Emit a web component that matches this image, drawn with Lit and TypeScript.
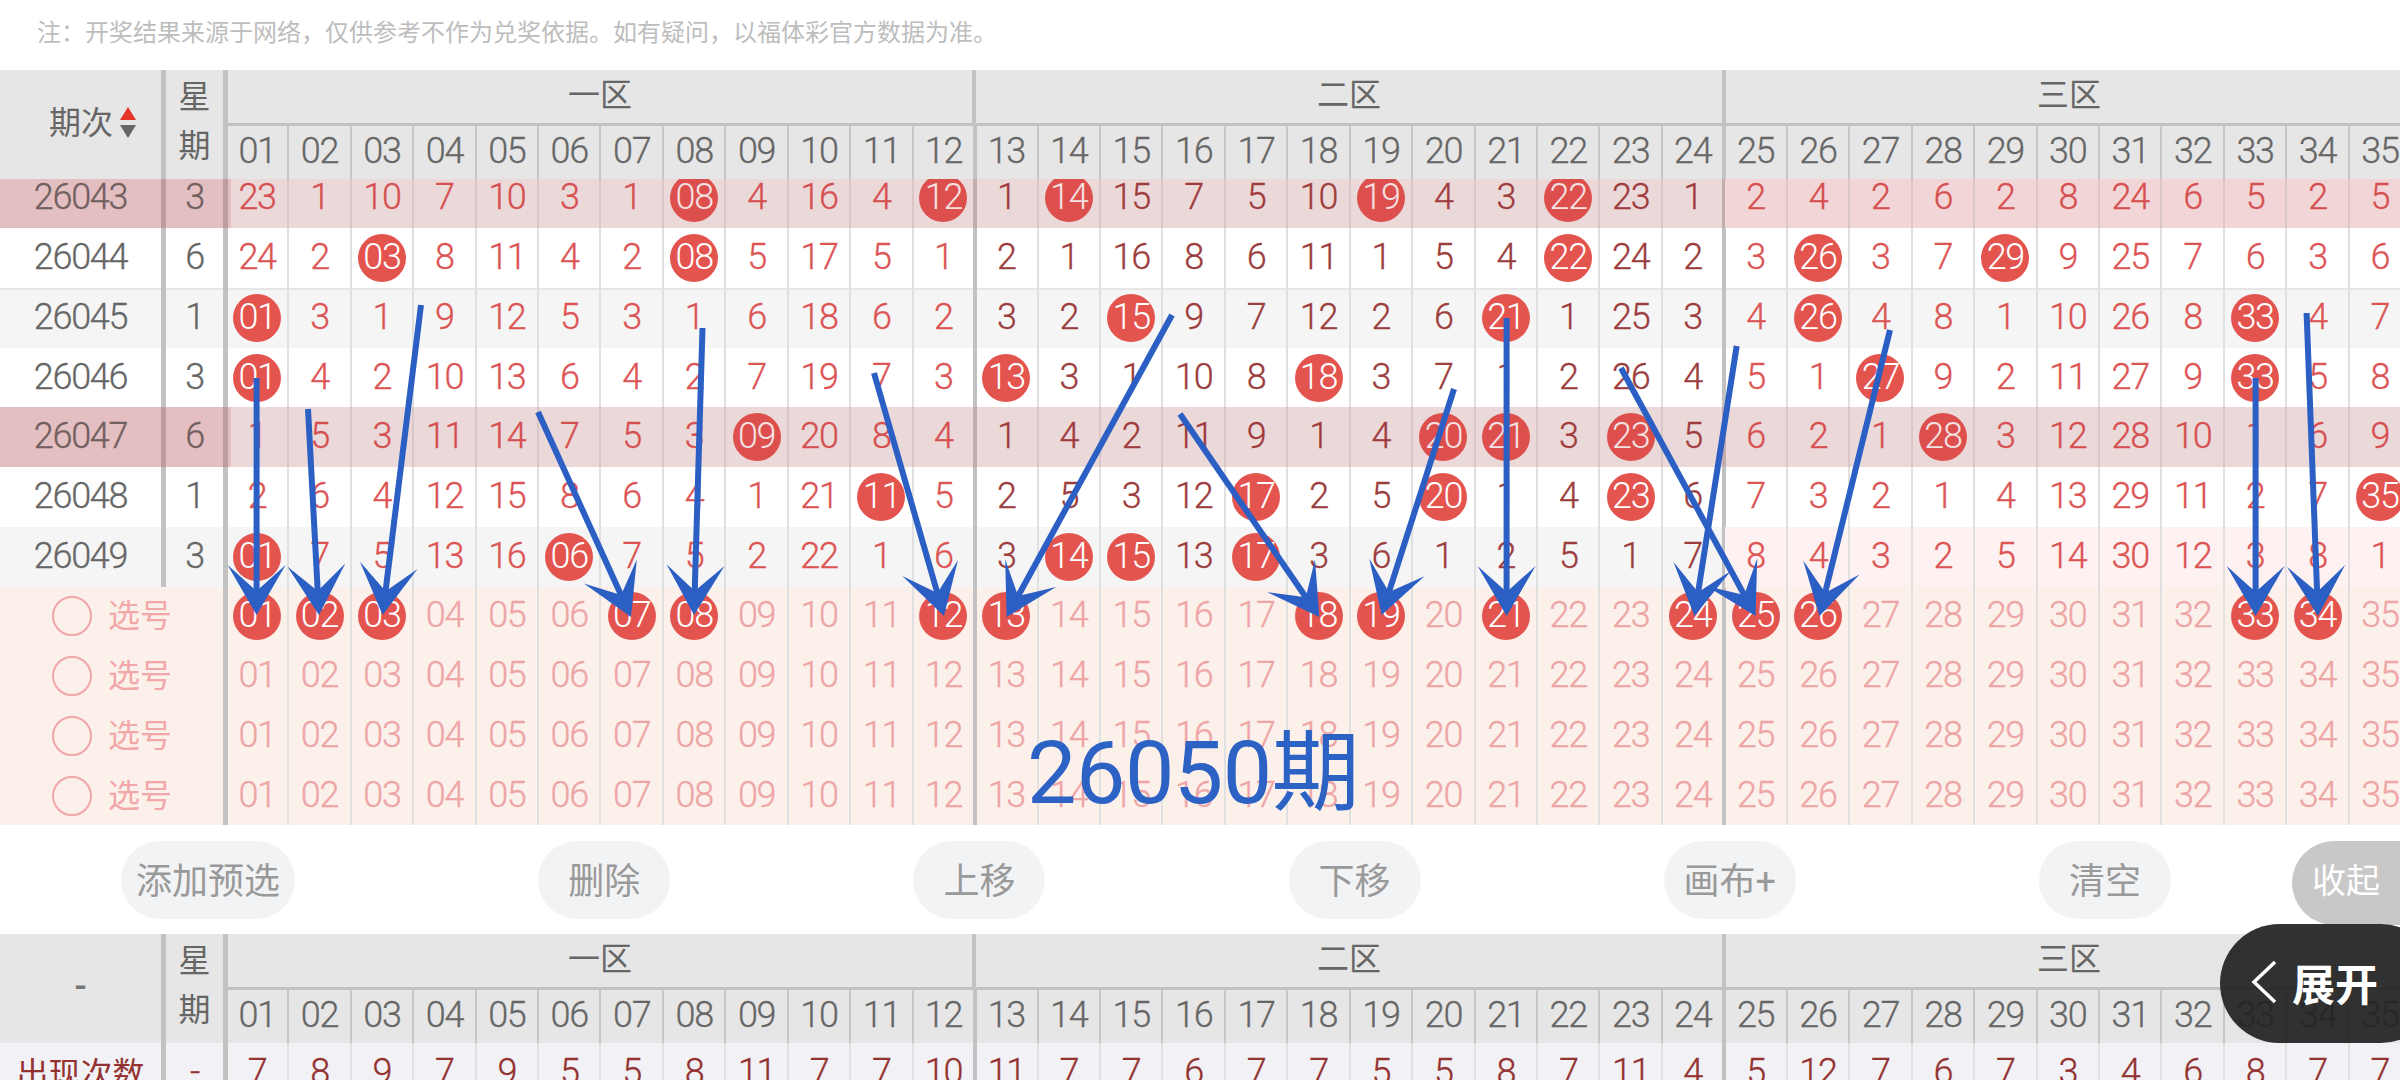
import { LitElement, html, css, svg } from "lit";
import { customElement } from "lit/decorators.js";

const pad = (n: number) => String(n).padStart(2, "0");
const ALL = Array.from({ length: 35 }, (_, i) => i + 1);

// "*" marks a drawn ball
const ROWS: { id: string; week: string; vals: string; cls: string }[] = [
  { id: "26043", week: "3", cls: "grey hl tint", vals: "23 1 10 7 10 3 1 *8 4 16 4 *12 1 *14 15 7 5 10 *19 4 3 *22 23 1 2 4 2 6 2 8 24 6 5 2 5" },
  { id: "26044", week: "6", cls: "", vals: "24 2 *3 8 11 4 2 *8 5 17 5 1 2 1 16 8 6 11 1 5 4 *22 24 2 3 *26 3 7 *29 9 25 7 6 3 6" },
  { id: "26045", week: "1", cls: "grey divided", vals: "*1 3 1 9 12 5 3 1 6 18 6 2 3 2 *15 9 7 12 2 6 *21 1 25 3 4 *26 4 8 1 10 26 8 *33 4 7" },
  { id: "26046", week: "3", cls: "", vals: "*1 4 2 10 13 6 4 2 7 19 7 3 *13 3 1 10 8 *18 3 7 1 2 26 4 5 1 *27 9 2 11 27 9 *33 5 8" },
  { id: "26047", week: "6", cls: "grey hl", vals: "1 5 3 11 14 7 5 3 *9 20 8 4 1 4 2 11 9 1 4 *20 *21 3 *23 5 6 2 1 *28 3 12 28 10 1 6 9" },
  { id: "26048", week: "1", cls: "", vals: "2 6 4 12 15 8 6 4 1 21 *11 5 2 5 3 12 *17 2 5 *20 1 4 *23 6 7 3 2 1 4 13 29 11 2 7 *35" },
  { id: "26049", week: "3", cls: "grey tint", vals: "*1 7 5 13 16 *6 7 5 2 22 1 6 3 *14 *15 13 *17 3 6 1 2 5 1 7 8 4 3 2 5 14 30 12 3 8 1" },
];

const PICKED = new Set([1, 2, 3, 7, 8, 12, 13, 18, 19, 21, 24, 25, 26, 33, 34]);
const TOTALS = "7 8 9 7 9 5 5 8 11 7 7 10 11 7 7 6 7 7 5 5 8 7 11 4 5 12 7 6 7 3 4 6 8 7 7".split(" ");

const ARROWS: number[][] = [
  [256.6, 378, 256.6, 615],
  [308, 409, 319, 615],
  [421, 305, 382.6, 615],
  [538, 412, 631, 617],
  [702.5, 328, 694, 615],
  [874, 373, 944, 616],
  [1172, 315, 1006.6, 617],
  [1180, 414, 1319.4, 617],
  [1454, 389, 1381.6, 615],
  [1506.6, 318, 1506.6, 616],
  [1736.7, 346, 1694.4, 616],
  [1621, 368, 1755.6, 616],
  [1890, 330, 1819.4, 616],
  [2255.6, 378, 2255.6, 616],
  [2306.6, 313, 2318, 616],
];

@customElement("app-root")
export class AppRoot extends LitElement {
  static styles = css`
    :host {
      display: block;
      width: 2400px;
      height: 1080px;
      font-family: Roboto, "Noto Sans CJK SC", sans-serif;
      --cell: 62.45px;
      --line: #e0e0e0;
      --thick: #c2c2c2;
    }
    .app {
      position: relative;
      width: 2400px;
      height: 1080px;
      overflow: hidden;
      background: #fff;
    }
    .note {
      height: 70px;
      box-sizing: border-box;
      padding: 19px 0 0 37px;
      font-size: 24px;
      line-height: 28px;
      color: #bdbdbd;
    }
    .num {
      font-size: 36px;
      font-weight: 300;
      letter-spacing: -1.3px;
      line-height: 1;
      -webkit-text-stroke: 0.3px currentColor;
    }

    /* header */
    .hdr {
      display: flex;
      height: 108.7px;
      background: #e6e6e6;
      color: #666;
      position: relative;
      z-index: 2;
    }
    .h-period {
      flex: none;
      width: 166px;
      box-sizing: border-box;
      border-right: 5px solid var(--thick);
      display: flex;
      align-items: center;
      justify-content: center;
      font-size: 32px;
      line-height: 1;
      padding-bottom: 3px;
    }
    .h-week {
      flex: none;
      width: 62px;
      margin-right: -1.15px;
      box-sizing: border-box;
      border-right: 5px solid var(--thick);
      display: flex;
      flex-direction: column;
      align-items: center;
      justify-content: center;
      font-size: 32px;
      line-height: 49px;
      padding-bottom: 4px;
    }
    .sort {
      display: flex;
      flex-direction: column;
      gap: 5px;
      margin: 0 -24px 0 7px;
    }
    .sort svg {
      display: block;
    }
    .dash {
      font-size: 36px;
      font-weight: 500;
      color: #777;
    }
    .h-grid {
      display: flex;
      flex-direction: column;
      flex: none;
      width: calc(var(--cell) * 35);
    }
    .zones {
      display: flex;
      height: 56px;
      box-sizing: border-box;
      border-bottom: 3px solid var(--thick);
      margin-left: 1.15px;
    }
    .zone {
      box-sizing: border-box;
      display: flex;
      align-items: center;
      justify-content: center;
      font-size: 32px;
      line-height: 1;
      padding-bottom: 3px;
      border-right: 4px solid var(--thick);
      flex: none;
    }
    .zone.z12 {
      width: calc(var(--cell) * 12);
    }
    .zone.z11 {
      width: calc(var(--cell) * 11);
      border-right: 0;
    }
    .zone.first {
      width: calc(var(--cell) * 12 - 1.15px);
    }
    .h-nums {
      display: flex;
      flex: 1;
    }
    .h-nums .cell {
      border-right-color: #c6c6c6;
    }
    .h-nums .cell.thick {
      border-right-color: var(--thick);
    }

    /* cells */
    .cell {
      flex: none;
      width: var(--cell);
      height: 100%;
      box-sizing: border-box;
      border-right: 2px solid var(--line);
      display: flex;
      align-items: center;
      justify-content: center;
    }
    .cell.thick {
      width: calc(var(--cell) + 1px);
      margin-right: -1px;
      border-right: 4px solid var(--thick);
    }
    .cell span,
    .r-period span,
    .r-week span {
      position: relative;
      top: -1px;
    }
    .ball {
      width: 48px;
      height: 48px;
      border-radius: 50%;
      background: #e4544f;
      color: #fff;
      display: flex;
      align-items: center;
      justify-content: center;
      flex: none;
      -webkit-text-stroke: 0;
    }

    /* rows */
    .body {
      overflow: hidden;
    }
    .scroll {
      margin-top: -10.15px;
    }
    .row {
      position: relative;
      display: flex;
      height: 59.73px;
      color: #dc5454;
    }
    .row .z2 {
      color: #9c3d3d;
    }
    .row .ball {
      color: #fff;
    }
    .row.grey {
      background: #f5f5f5;
    }
    .row.tint .z3 {
      background: #fdf1f1;
    }
    .row.divided {
      box-shadow: inset 0 2px 0 #e6e6e6;
    }
    .row.hl::after,
    .row.hl::before {
      content: "";
      position: absolute;
      top: 0;
      bottom: 0;
      left: 0;
      background: rgba(180, 53, 60, 0.15);
    }
    .row.hl::after {
      right: 0;
    }
    .row.hl::before {
      width: 231px;
    }
    .r-period {
      flex: none;
      width: 166px;
      box-sizing: border-box;
      border-right: 5px solid var(--thick);
      display: flex;
      align-items: center;
      justify-content: center;
      color: #666;
    }
    .r-week {
      flex: none;
      width: 62px;
      margin-right: -1.15px;
      box-sizing: border-box;
      border-right: 5px solid var(--thick);
      display: flex;
      align-items: center;
      justify-content: center;
      color: #666;
    }

    /* pick rows */
    .picks {
      background: #fcf0eb;
    }
    .pick {
      display: flex;
      height: 59.73px;
      color: #eea5a5;
    }
    .p-label {
      flex: none;
      width: 228px;
      margin-right: -1.15px;
      box-sizing: border-box;
      border-right: 5px solid var(--thick);
      display: flex;
      align-items: center;
      padding-left: 52px;
      gap: 16px;
      font-size: 32px;
      color: #f2a8a8;
    }
    .p-label span:last-child {
      position: relative;
      top: -3px;
    }
    .radio {
      flex: none;
      width: 40px;
      height: 40px;
      box-sizing: border-box;
      border: 2.5px solid #f0a6a6;
      border-radius: 50%;
    }

    /* action buttons */
    .actions {
      display: flex;
      gap: 243.2px;
      align-items: center;
      height: 108.4px;
      padding-left: 121px;
    }
    .btn {
      flex: none;
      min-width: 132px;
      height: 78px;
      box-sizing: border-box;
      padding: 0 15px 4px;
      border-radius: 39px;
      background: #f2f3f5;
      color: #999;
      font-size: 36px;
      display: flex;
      align-items: center;
      justify-content: center;
    }

    /* totals */
    .totals {
      display: flex;
      height: 60px;
      background: #f2f1f5;
      color: #933230;
    }
    .totals .r-period {
      color: #933230;
      font-size: 32px;
      white-space: nowrap;
    }
    .totals .r-period span {
      top: -2px;
    }
    .totals .r-week {
      color: #933230;
    }

    /* floating layers */
    .arrows {
      position: absolute;
      inset: 0;
      pointer-events: none;
      z-index: 3;
    }
    .stamp {
      position: absolute;
      left: 1027px;
      top: 721px;
      font-size: 88px;
      line-height: 104px;
      letter-spacing: -0.5px;
      color: #2b62c4;
      white-space: nowrap;
      z-index: 3;
    }
    .collapse {
      position: absolute;
      left: 2292px;
      top: 841px;
      width: 150px;
      height: 84px;
      border-radius: 42px;
      background: #c8c8c8;
      color: #fff;
      font-size: 34px;
      line-height: 80px;
      padding-left: 20px;
      box-sizing: border-box;
      z-index: 4;
    }
    .expand {
      position: absolute;
      left: 2220px;
      top: 924px;
      width: 220px;
      height: 119px;
      border-radius: 60px;
      background: rgba(34, 34, 34, 0.93);
      color: #fff;
      font-size: 43px;
      font-weight: 700;
      display: flex;
      align-items: center;
      gap: 15px;
      padding: 0 0 3px 31px;
      box-sizing: border-box;
      z-index: 5;
    }
  `;

  private header(labelTpl: unknown) {
    return html`
      <div class="hdr">
        <div class="h-period">${labelTpl}</div>
        <div class="h-week"><div>星</div><div>期</div></div>
        <div class="h-grid">
          <div class="zones">
            <div class="zone z12 first">一区</div>
            <div class="zone z12">二区</div>
            <div class="zone z11">三区</div>
          </div>
          <div class="h-nums">
            ${ALL.map(
              (n) => html`<div class="cell num ${n === 12 || n === 24 ? "thick" : ""}"><span>${pad(n)}</span></div>`
            )}
          </div>
        </div>
      </div>
    `;
  }

  private cell(text: string, idx: number) {
    const n = idx + 1;
    const ball = text.startsWith("*");
    const label = ball ? pad(Number(text.slice(1))) : text;
    const zone = n <= 12 ? "z1" : n <= 24 ? "z2" : "z3";
    const thick = n === 12 || n === 24 ? "thick" : "";
    return html`<div class="cell num ${zone} ${thick}">
      ${ball ? html`<div class="ball"><span>${label}</span></div>` : html`<span>${label}</span>`}
    </div>`;
  }

  private arrow([x1, y1, x2, y2]: number[]) {
    const len = Math.hypot(x2 - x1, y2 - y1);
    const ux = (x2 - x1) / len;
    const uy = (y2 - y1) / len;
    const back = 50;
    const side = 29;
    const notch = 24;
    const bx = x2 - ux * back;
    const by = y2 - uy * back;
    const pts = [
      [x2, y2],
      [bx - uy * side, by + ux * side],
      [x2 - ux * notch, y2 - uy * notch],
      [bx + uy * side, by - ux * side],
    ]
      .map((p) => p.map((v) => v.toFixed(1)).join(","))
      .join(" ");
    return svg`
      <line x1=${x1} y1=${y1} x2=${x2 - ux * 20} y2=${y2 - uy * 20} stroke="#2b5fc4" stroke-width="6" />
      <polygon points=${pts} fill="#2b5fc4" />
    `;
  }

  render() {
    const sortIcon = html`<span class="sort">
      <svg width="16" height="13" viewBox="0 0 16 13"><path d="M8 0L16 13H0Z" fill="#e6352a" /></svg>
      <svg width="16" height="13" viewBox="0 0 16 13"><path d="M0 0H16L8 13Z" fill="#666" /></svg>
    </span>`;

    return html`
      <div class="app">
        <div class="note">注：开奖结果来源于网络，仅供参考不作为兑奖依据。如有疑问，以福体彩官方数据为准。</div>

        ${this.header(html`<span>期次</span>${sortIcon}`)}
        <div class="body">
          <div class="scroll">
            ${ROWS.map(
              (r) => html`
                <div class="row ${r.cls}">
                  <div class="r-period num"><span>${r.id}</span></div>
                  <div class="r-week num"><span>${r.week}</span></div>
                  ${r.vals.split(" ").map((v, i) => this.cell(v, i))}
                </div>
              `
            )}
            <div class="picks">
              ${[0, 1, 2, 3].map(
                (p) => html`
                  <div class="pick">
                    <div class="p-label"><span class="radio"></span><span>选号</span></div>
                    ${ALL.map((n) =>
                      this.pickCell(n, p === 0 && PICKED.has(n))
                    )}
                  </div>
                `
              )}
            </div>
          </div>
        </div>

        <div class="actions">
          ${["添加预选", "删除", "上移", "下移", "画布+", "清空"].map((t) => html`<div class="btn">${t}</div>`)}
        </div>

        ${this.header(html`<span class="dash">-</span>`)}
        <div class="totals">
          <div class="r-period"><span>出现次数</span></div>
          <div class="r-week num"><span>-</span></div>
          ${TOTALS.map((v, i) => this.cell(v, i))}
        </div>

        <svg class="arrows" width="2400" height="1080" viewBox="0 0 2400 1080">
          ${ARROWS.map((a) => this.arrow(a))}
        </svg>
        <div class="stamp">26050期</div>
        <div class="collapse">收起</div>
        <div class="expand">
          <svg width="26" height="44" viewBox="0 0 26 44" fill="none">
            <path d="M24 2L3 22L24 42" stroke="#fff" stroke-width="3.5" />
          </svg>
          <span>展开</span>
        </div>
      </div>
    `;
  }

  private pickCell(n: number, on: boolean) {
    const thick = n === 12 || n === 24 ? "thick" : "";
    return html`<div class="cell num ${thick}">
      ${on ? html`<div class="ball"><span>${pad(n)}</span></div>` : html`<span>${pad(n)}</span>`}
    </div>`;
  }
}
